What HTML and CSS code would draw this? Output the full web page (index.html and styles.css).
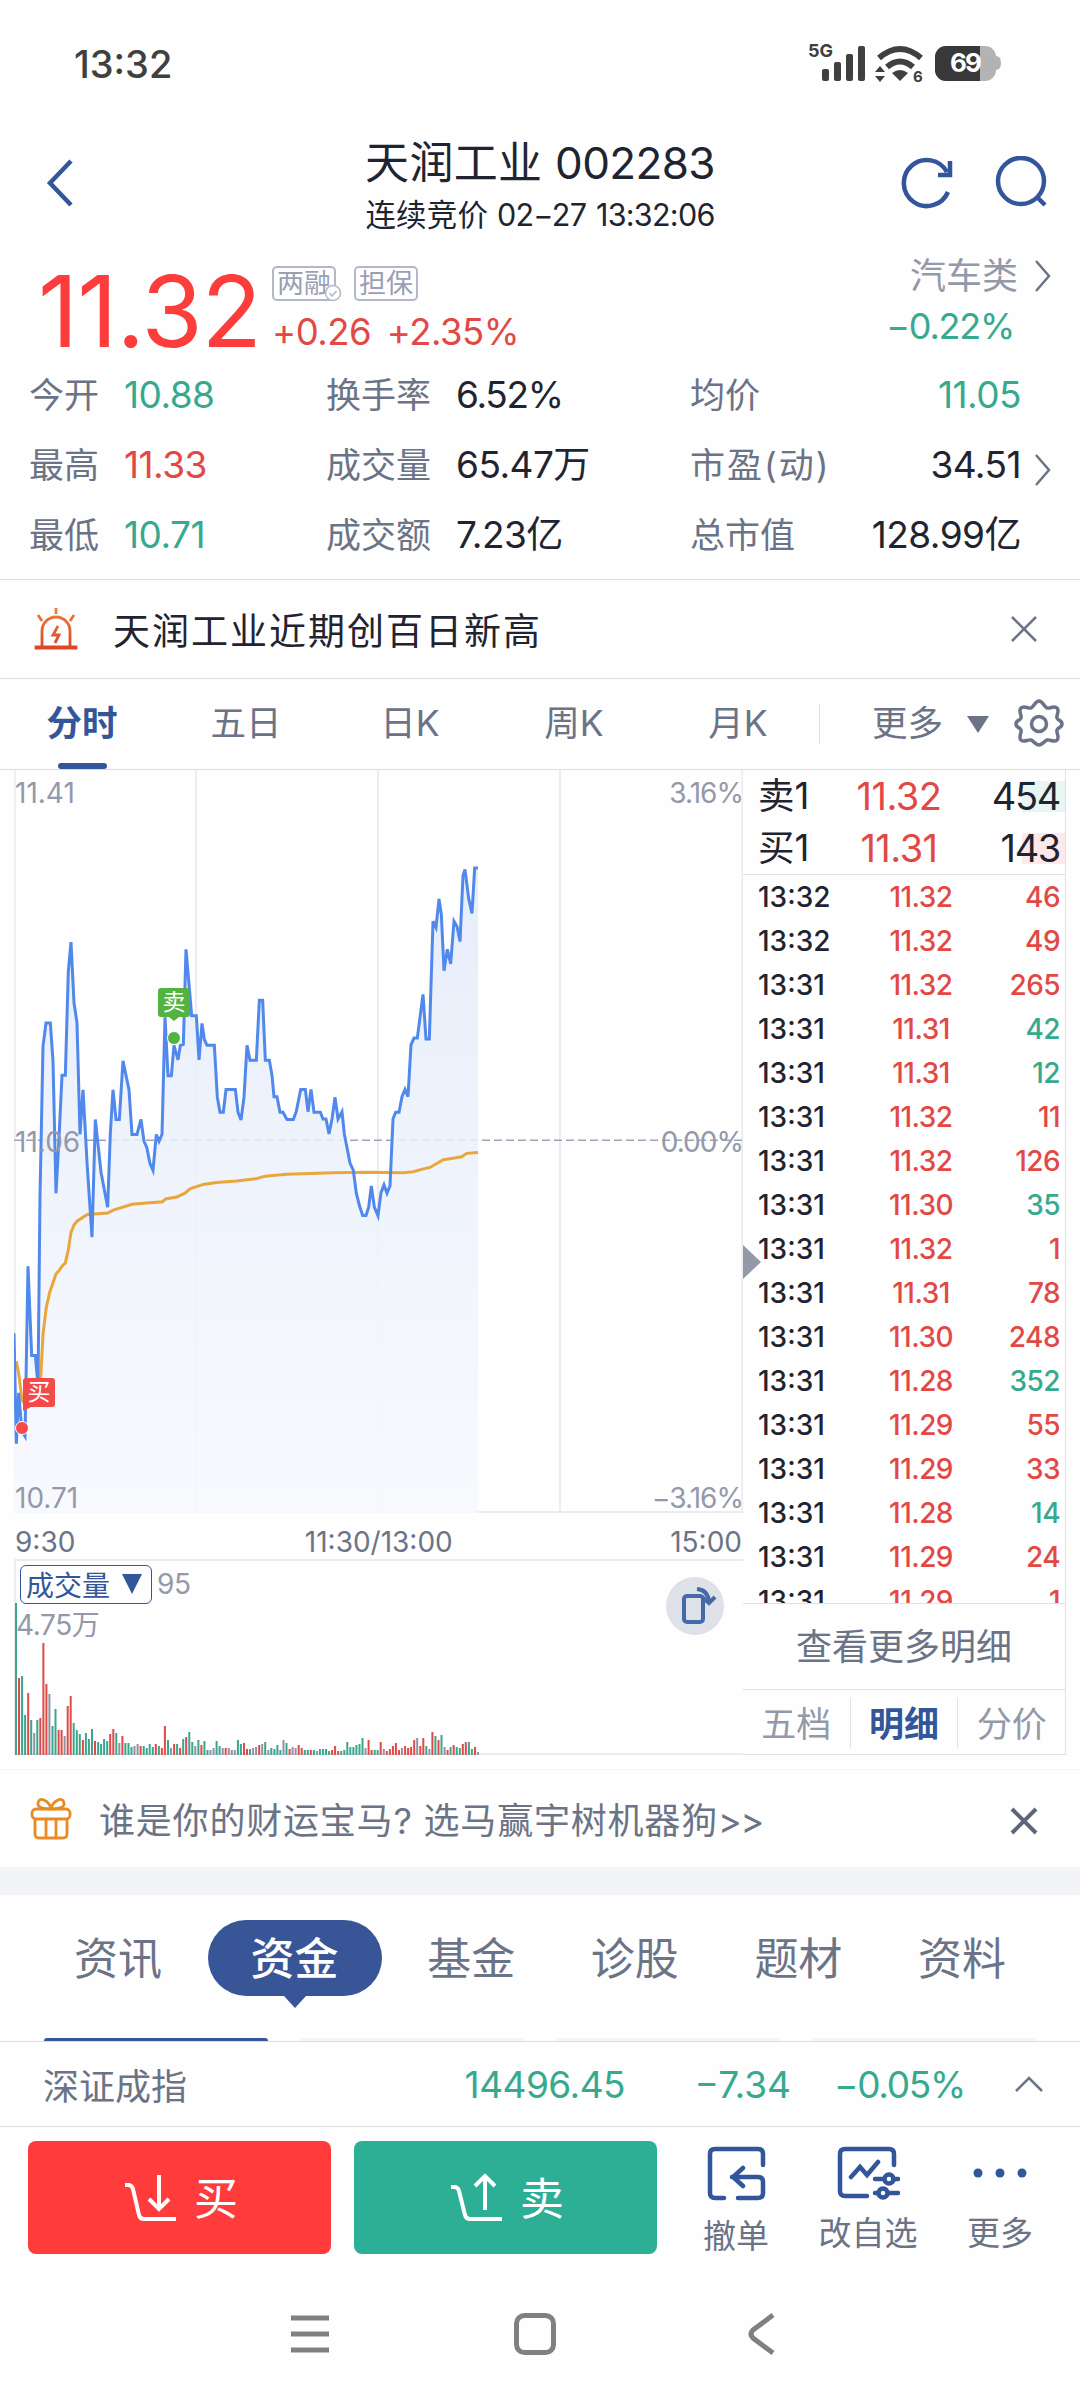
FILE: index.html
```html
<!DOCTYPE html>
<html lang="zh-CN">
  <head>
    <meta charset="UTF-8" />
    <meta name="viewport" content="width=device-width, initial-scale=1.0" />
    <title>天润工业 002283</title>
    <link rel="stylesheet" href="styles.css">
  </head>
  <body>
    <div class="status-bar">
      <span class="clock">13:32</span>
      <svg class="status-icons" width="200" height="44" viewBox="0 0 200 44">
        <g fill="#404040">
          <text x="0" y="16" class="net">5G</text>
          <rect x="14" y="28" width="7" height="12" rx="2" />
          <rect x="26" y="21" width="7" height="19" rx="2" />
          <rect x="38" y="13" width="7" height="27" rx="2" />
          <rect x="50" y="5" width="7" height="35" rx="2" />
          <path d="M92 40l-8-8q8-6 16 0z" />
          <path d="M72 25l5 6h-10zM72 41l5-6h-10z" />
          <text x="105" y="41" class="wifi-gen">6</text>
        </g>
        <path d="M71 17q21-18 42 0" fill="none" stroke="#404040" stroke-width="6" />
        <path d="M79 26q13-11 26 0" fill="none" stroke="#404040" stroke-width="6" />
        <rect x="127" y="5" width="61" height="35" rx="11" fill="#b3b3b3" />
        <path d="M188 15q5 0 5 7t-5 7z" fill="#b3b3b3" />
        <path d="M138 5h34v35h-34a11 11 0 0 1-11-11v-13a11 11 0 0 1 11-11z" fill="#383838" />
        <text x="142" y="31" class="battery">69</text>
      </svg>
    </div>

    <header class="header">
      <svg class="back" width="28" height="50" viewBox="0 0 28 50"><path d="M25 3L4 25l21 22" /></svg>
      <div class="title">
        <h1>天润工业 <span class="n">002283</span></h1>
        <p>连续竞价 <span class="n">02−27 13:32:06</span></p>
      </div>
      <div class="header-icons">
        <svg width="54" height="54" viewBox="0 0 54 54"><path d="M48 36a23 23 0 1 1-1-20M50 5v14h-12" /></svg>
        <svg width="54" height="54" viewBox="0 0 54 54"><circle cx="26" cy="25" r="23" /><path d="M41 40l9 9" /></svg>
      </div>
    </header>

    <section class="quote">
      <div class="quote-top">
        <div class="price">11.32</div>
        <div class="change">
          <div class="tags">
            <span class="tag">两融<svg class="check" width="18" height="18" viewBox="0 0 18 18"><circle cx="9" cy="9" r="7.5" /><path d="M5.500 9l2.500 3 4.500-5" /></svg></span>
            <span class="tag">担保</span>
          </div>
          <p class="red">+0.26 +2.35%</p>
        </div>
        <div class="sector">
          <p>汽车类 <svg class="chevron" width="16" height="32" viewBox="0 0 16 32"><path d="M1 1l13 15L1 31" /></svg></p>
          <p class="green pct">−0.22%</p>
        </div>
      </div>
      <div class="stats">
        <span>今开</span><b class="green n">10.88</b>
        <span>换手率</span><b class="n pct">6.52%</b>
        <span>均价</span><b class="green n">11.05</b><i></i>
        <span>最高</span><b class="red n">11.33</b>
        <span>成交量</span><b class="n">65.47万</b>
        <span class="wide">市盈(动)</span><b class="n">34.51</b>
        <i><svg class="chevron" width="16" height="32" viewBox="0 0 16 32"><path d="M1 1l13 15L1 31" /></svg></i>
        <span>最低</span><b class="green n">10.71</b>
        <span>成交额</span><b class="n">7.23亿</b>
        <span>总市值</span><b class="n">128.99亿</b><i></i>
      </div>
    </section>

    <section class="alert">
      <svg width="44" height="44" viewBox="0 0 44 44">
        <defs>
          <linearGradient id="alarm" x1="0" y1="0" x2="0" y2="1">
            <stop offset="0" stop-color="#e8823a" />
            <stop offset="1" stop-color="#df4526" />
          </linearGradient>
        </defs>
        <path d="M2 41h40v-1H2zM8 40V24a14 14 0 0 1 28 0v16M22 1v6M4 8l4 6M40 8l-4 6M24 19l-5 9h6l-4 8" fill="none" stroke="url(#alarm)" stroke-width="2.800" />
      </svg>
      <p>天润工业近期创百日新高</p>
      <svg class="close" width="26" height="26" viewBox="0 0 26 26"><path d="M1 1l24 24M25 1L1 25" /></svg>
    </section>

    <nav class="periods">
      <a class="active">分时</a>
      <a>五日</a>
      <a>日K</a>
      <a>周K</a>
      <a>月K</a>
      <div class="more">更多 <i></i></div>
      <svg class="gear" width="50" height="50" viewBox="0 0 50 50">
        <path d="M25 2c4 0 5 6 8 7s7-3 10 0-1 7 0 10 5 2 5 6-4 3-5 6 3 7 0 10-7-1-10 0-4 5-8 5-5-4-8-5-7 3-10 0 1-7 0-10-5-2-5-6 4-3 5-6-3-7 0-10 7 1 10 0 4-7 8-7z" />
        <circle cx="25" cy="25" r="7.500" />
      </svg>
    </nav>

    <main class="market">
      <div class="charts">
        <div class="price-chart">
          <svg width="729" height="743" viewBox="42 20 2187 1533" preserveAspectRatio="none">
            <defs>
              <linearGradient id="area" x1="0" y1="0" x2="0" y2="1">
                <stop offset="0" stop-color="#e3ebf9" stop-opacity="0.850" />
                <stop offset="1" stop-color="#f8f9fe" stop-opacity="0.900" />
              </linearGradient>
            </defs>
            <path class="grid" d="M44 20V1553M588 20V1553M1134 20V1553M1680 20V1553M2227 20V1553M42 1551H2229" />
            <path class="mid" d="M42 784H2229" />
            <path id="fill" fill="url(#area)" />
            <polyline id="average" points="49,1240 57,1270 66,1320 75,1330 112,1330 122,1275 129,1185 139,1128 150,1096 168,1060 178,1052 186,1044 196,1037 205,1010 213,974 222,959 231,951 262,937 323,934 340,928 396,916 450,913 487,911 497,905 530,901 555,893 570,884 610,875 650,871 710,868 770,863 795,858 860,854 1000,851 1100,850 1210,851 1240,849 1270,843 1290,840 1330,824 1350,822 1385,818 1400,811 1434,809" />
            <polyline id="price" points="42,1182 49,1410 56,1305 66,1385 75,1395 84,1044 95,1228 106,1228 114,1290 120,900 129,590 138,542 151,542 159,620 168,893 177,780 186,650 196,650 205,435 213,375 222,500 231,542 240,772 249,680 262,840 276,984 286,741 303,850 323,922 331,770 339,680 348,741 358,741 369,620 387,680 396,772 411,772 423,741 432,786 440,798 450,832 459,846 469,772 477,786 486,772 495,530 504,651 514,651 522,588 534,618 541,588 550,586 558,390 568,470 575,527 589,527 597,618 606,543 613,576 621,588 643,588 652,695 660,726 670,726 678,679 706,679 714,726 723,742 732,695 741,588 750,619 769,619 778,495 788,495 796,619 808,619 816,650 822,694 831,694 840,726 849,726 861,741 880,741 889,724 902,679 916,679 924,725 933,679 942,726 961,726 969,740 978,740 987,771 996,740 1005,695 1014,740 1026,725 1033,771 1050,831 1060,846 1069,893 1078,918 1088,939 1098,939 1106,922 1114,878 1123,922 1134,940 1143,892 1152,876 1161,893 1170,878 1179,740 1187,726 1197,726 1206,694 1215,679 1224,694 1233,587 1242,573 1252,573 1269,483 1278,575 1288,575 1299,332 1308,345 1317,286 1324,318 1332,434 1342,390 1352,420 1362,332 1371,343 1380,374 1389,238 1395,225 1406,285 1416,316 1424,222 1434,222" />
          </svg>
          <div class="scale">
            <p><span>11.41</span><span class="pct">3.16%</span></p>
            <p><span>11.06</span><span class="pct">0.00%</span></p>
            <p><span>10.71</span><span class="pct">−3.16%</span></p>
          </div>
          <span class="marker sell">卖</span>
          <span class="dot sell-dot"></span>
          <span class="marker buy">买</span>
          <span class="dot buy-dot"></span>
        </div>
        <div class="times"><span>9:30</span><span class="noon">11:30/13:00</span><span>15:00</span></div>
        <div class="volume">
          <svg id="bars" width="729" height="152" viewBox="0 0 729 152"></svg>
          <div class="volume-head"><span class="select">成交量 <i></i></span><span class="n">95</span></div>
          <p class="n">4.75万</p>
          <div class="rotate">
            <svg width="58" height="58" viewBox="0 0 58 58">
              <rect x="18" y="19" width="19" height="26" rx="3" />
              <path d="M31 12q11 1 12 13M36 20l7 6 6-6" />
            </svg>
          </div>
        </div>
      </div>

      <aside class="book">
        <div class="level ask"><span>卖1</span><b class="n">11.32</b><em class="pct">454</em></div>
        <div class="level bid"><span>买1</span><b class="n">11.31</b><em class="pct">143</em></div>
        <ul class="ticks">
          <li><span>13:32</span><b>11.32</b><em>46</em></li>
          <li><span>13:32</span><b>11.32</b><em>49</em></li>
          <li><span>13:31</span><b>11.32</b><em>265</em></li>
          <li><span>13:31</span><b>11.31</b><em class="green">42</em></li>
          <li><span>13:31</span><b>11.31</b><em class="green">12</em></li>
          <li><span>13:31</span><b>11.32</b><em>11</em></li>
          <li><span>13:31</span><b>11.32</b><em>126</em></li>
          <li><span>13:31</span><b>11.30</b><em class="green">35</em></li>
          <li><span>13:31</span><b>11.32</b><em>1</em></li>
          <li><span>13:31</span><b>11.31</b><em>78</em></li>
          <li><span>13:31</span><b>11.30</b><em>248</em></li>
          <li><span>13:31</span><b>11.28</b><em class="green">352</em></li>
          <li><span>13:31</span><b>11.29</b><em>55</em></li>
          <li><span>13:31</span><b>11.29</b><em>33</em></li>
          <li><span>13:31</span><b>11.28</b><em class="green">14</em></li>
          <li><span>13:31</span><b>11.29</b><em>24</em></li>
          <li><span>13:31</span><b>11.29</b><em>1</em></li>
        </ul>
        <div class="book-more">查看更多明细</div>
        <div class="book-tabs"><a>五档</a><a class="active">明细</a><a>分价</a></div>
        <i class="collapse"></i>
      </aside>
    </main>

    <section class="promo">
      <svg width="42" height="42" viewBox="0 0 42 42">
        <rect x="2" y="11" width="38" height="10" rx="4" />
        <path d="M5 21v15q0 4 4 4h24q4 0 4-4V21M16 21v19M26 21v19M21 11q-14 0-13-6 1-5 6-3 6 3 7 9 1-6 7-9 5-2 6 3 1 6-13 6" />
      </svg>
      <p>谁是你的财运宝马? 选马赢宇树机器狗<span class="pct">&gt;&gt;</span></p>
      <svg class="close" width="28" height="28" viewBox="0 0 28 28"><path d="M2 2l24 24M26 2L2 26" /></svg>
    </section>

    <nav class="info-tabs">
      <a>资讯</a><a class="active">资金</a><a>基金</a><a>诊股</a><a>题材</a><a>资料</a>
    </nav>
    <div class="sub-tabs"><i class="active"></i><i></i><i></i><i></i></div>

    <section class="index-bar">
      <span>深证成指</span>
      <b class="n">14496.45</b>
      <b class="points">−7.34</b>
      <b class="percent pct">−0.05%</b>
      <svg width="30" height="18" viewBox="0 0 30 18"><path d="M2 16L15 3l13 13" /></svg>
    </section>

    <footer class="actions">
      <button class="buy-btn">
        <svg width="56" height="50" viewBox="0 0 56 50"><path d="M2 12h3q4 0 5 4l6 26q1 4 5 4h32M36 2v33M26 26l10 10 10-10" /></svg>买
      </button>
      <button class="sell-btn">
        <svg width="56" height="50" viewBox="0 0 56 50"><path d="M2 14h3q4 0 5 4l6 24q1 4 5 4h32M36 37V3M26 13L36 3l10 10" /></svg>卖
      </button>
      <a class="low">
        <svg width="60" height="56" viewBox="0 0 60 56"><path d="M18 53H9q-5 0-5-5V9q0-5 5-5h43q5 0 5 5v11M32 53h20q5 0 5-5V37q0-5-5-5H26M37 23l-10 9 10 9" /></svg>
        撤单
      </a>
      <a>
        <svg width="64" height="56" viewBox="0 0 64 56"><path d="M31 51H9q-5 0-5-5V9q0-5 5-5h44q5 0 5 5v11M15 32l9-10 7 8 11-13M39 34h8M57 34h5M39 48h3M52 48h10" /><circle cx="53" cy="34" r="4.500" /><circle cx="47" cy="48" r="4.500" /></svg>
        改自选
      </a>
      <a>
        <svg width="60" height="56" viewBox="0 0 60 56"><g class="dots"><circle cx="8" cy="28" r="4.500" /><circle cx="30" cy="28" r="4.500" /><circle cx="52" cy="28" r="4.500" /></g></svg>
        更多
      </a>
    </footer>

    <div class="system-nav">
      <svg width="42" height="42" viewBox="0 0 42 42"><path d="M2 5h38M2 21h38M2 37h38" /></svg>
      <svg width="42" height="42" viewBox="0 0 42 42"><rect x="2.500" y="2.500" width="37" height="37" rx="8" /></svg>
      <svg width="42" height="42" viewBox="0 0 42 42"><path d="M34 2L14 17q-4 4 0 8l20 15" /></svg>
    </div>

    <script src="script.js"></script>
  </body>
</html>
```
FILE: styles.css
```css
* {
  box-sizing: border-box;
}
body {
  font-family: Inter, "Noto Sans CJK SC", sans-serif;
  width: 1080px;
  margin: 0;
  color: #1f2430;
  background-color: #fefefe;
}
h1, p, ul {
  margin: 0;
  padding: 0;
}
b, i, em {
  font-weight: normal;
  font-style: normal;
}
svg {
  display: block;
  flex: none;
}
.n {
  letter-spacing: -0.014em;
}
.pct {
  letter-spacing: -0.035em;
}
.red {
  color: #e24845;
}
.green {
  color: #36a98f;
}

/* status bar */
.status-bar {
  display: flex;
  justify-content: space-between;
  height: 128px;
  padding: 0 72px 0 74px;
}
.clock {
  font-size: 38px;
  font-weight: 500;
  line-height: 128px;
  color: #404040;
}
.status-icons {
  margin-top: 41px;
  overflow: visible;
}
.net {
  font-size: 18px;
  font-weight: 700;
}
.wifi-gen {
  font-size: 15px;
  font-weight: 700;
}
.battery {
  font-size: 26px;
  font-weight: 700;
  letter-spacing: -2px;
  fill: #fff;
}

/* header */
.header {
  display: flex;
  align-items: center;
  height: 110px;
  padding: 0 30px 0 46px;
}
.header svg {
  fill: none;
  stroke: #33569b;
  stroke-width: 4.500;
}
.back {
  margin-right: 106px;
}
.title {
  flex: 1;
  padding-top: 11px;
  text-align: center;
}
.title h1 {
  font-size: 44px;
  font-weight: 400;
  line-height: 51px;
  letter-spacing: 0.300px;
}
.title p {
  font-size: 30.500px;
  line-height: 51px;
  letter-spacing: 0.200px;
}
.title p .n {
  letter-spacing: -0.024em;
  word-spacing: 2px;
}
.header-icons {
  display: flex;
  gap: 41px;
  width: 150px;
}

/* quote */
.quote {
  border-bottom: 1px solid #dcdddf;
  padding-bottom: 9px;
}
.quote-top {
  display: flex;
  height: 122px;
  padding: 0 29px 0 38px;
}
.price {
  width: 234px;
  font-size: 99px;
  line-height: 147px;
  letter-spacing: -0.010em;
  color: #fd3c3c;
}
.change {
  flex: 1;
  padding-top: 28px;
}
.tags {
  display: flex;
  gap: 18px;
}
.tag {
  position: relative;
  height: 35px;
  padding: 0 3px;
  border: 2px solid #b4b7c6;
  border-radius: 5px;
  font-size: 27px;
  line-height: 32px;
  color: #9a9fb2;
}
.check {
  position: absolute;
  right: -8px;
  bottom: -3px;
  fill: #fefefe;
  stroke: #b4b7c6;
  stroke-width: 1.500;
}
.change p {
  margin-top: 11px;
  font-size: 36.500px;
  line-height: 40px;
  letter-spacing: -0.014em;
  word-spacing: 6px;
}
.sector {
  padding-top: 18px;
  font-size: 36px;
  line-height: 40px;
  color: #9499aa;
}
.sector p:first-child {
  display: flex;
  align-items: center;
  justify-content: flex-end;
  gap: 17px;
}
.sector .green {
  margin: 10px 37px 0 0;
  text-align: right;
  color: #36a98f;
}
.chevron {
  fill: none;
  stroke: #6b7386;
  stroke-width: 2.500;
}
.stats {
  display: grid;
  grid-template-columns: 95px 202px 130px 234px 150px 181px 46px;
  padding-left: 29px;
  font-size: 35px;
  line-height: 70px;
}
.stats span {
  color: #6b7386;
}
.stats .wide {
  letter-spacing: 2px;
}
.stats b {
  font-size: 37px;
}
.stats b:nth-child(7n + 6) {
  text-align: right;
}
.stats i {
  padding: 24px 0 0 14px;
}

/* alert */
.alert {
  display: flex;
  align-items: center;
  height: 99px;
  padding: 0 43px 0 34px;
  border-bottom: 1px solid #dcdddf;
}
.alert p {
  flex: 1;
  margin-left: 35px;
  font-size: 37px;
  letter-spacing: 2px;
}
.close {
  fill: none;
  stroke: #6b7386;
  stroke-width: 2.500;
}

/* period tabs */
.periods {
  display: flex;
  align-items: center;
  height: 91px;
  border-bottom: 1px solid #dcdddf;
  font-size: 35.500px;
  color: #6b7386;
}
.periods a {
  position: relative;
  width: 164px;
  line-height: 86px;
  text-align: center;
}
.periods a.active {
  color: #33569b;
  font-weight: 700;
}
.periods a.active::after {
  content: "";
  position: absolute;
  left: 58px;
  bottom: -2px;
  width: 49px;
  height: 6px;
  border-radius: 3px;
  background-color: #33569b;
}
.more {
  display: flex;
  align-items: center;
  gap: 24px;
  margin-right: 25px;
  margin-left: -1px;
  padding-left: 52px;
  border-left: 1px solid #dcdddf;
  line-height: 40px;
}
.more i {
  border: 11px solid transparent;
  border-top: 17px solid #6b7386;
  border-bottom: none;
}
.gear {
  fill: none;
  stroke: #6b7386;
  stroke-width: 3.500;
}

/* charts */
.market {
  display: flex;
  padding: 0 14px;
}
.charts {
  width: 729px;
}
.price-chart {
  position: relative;
  height: 743px;
}
.price-chart path,
.price-chart polyline {
  vector-effect: non-scaling-stroke;
}
.grid {
  fill: none;
  stroke: #ececee;
  stroke-width: 2;
}
.mid {
  stroke: #9aa3b3;
  stroke-width: 1.500;
  stroke-dasharray: 8 4;
}
#average {
  fill: none;
  stroke: #e9a63c;
  stroke-width: 3;
}
#price {
  fill: none;
  stroke: #5088ec;
  stroke-width: 3;
}
.scale {
  position: absolute;
  inset: 0;
  display: flex;
  flex-direction: column;
  justify-content: space-between;
  padding: 8px 0 0 1px;
  font-size: 28px;
  line-height: 30px;
  color: #9499aa;
}
/* sits just under the dashed line */
.scale p:nth-child(2) {
  margin-bottom: 7px;
}
.scale p,
.times {
  display: flex;
  justify-content: space-between;
}
.marker {
  position: absolute;
  width: 32px;
  height: 29px;
  border-radius: 3px;
  font-size: 23px;
  line-height: 29px;
  text-align: center;
  color: #fff;
}
.marker::after {
  content: "";
  position: absolute;
}
.sell {
  left: 144px;
  top: 218px;
  background-color: #52b341;
}
.sell::after {
  left: 11px;
  top: 29px;
  border: 5px solid transparent;
  border-top: 4px solid #52b341;
  border-bottom: none;
}
.buy {
  left: 9px;
  top: 608px;
  background-color: #f54a4a;
}
.buy::after {
  left: 0;
  top: 27px;
  border-right: 12px solid transparent;
  border-top: 6px solid #f54a4a;
}
.dot {
  position: absolute;
  width: 14px;
  height: 14px;
  border: 1px solid #fff;
  border-radius: 50%;
}
.sell-dot {
  left: 153px;
  top: 261px;
  background-color: #52b341;
}
.buy-dot {
  left: 1px;
  top: 651px;
  background-color: #f54a4a;
}
.times {
  height: 46px;
  padding: 0 1px;
  font-size: 28px;
  line-height: 59px;
  color: #6b7386;
}
.noon {
  margin-left: 12px;
}
.volume {
  position: relative;
  height: 196px;
  border: 2px solid #ececee;
  border-right: none;
}
#bars {
  position: absolute;
  left: -1px;
  bottom: -2px;
}
.volume-head {
  display: flex;
  align-items: center;
  gap: 5px;
  height: 46px;
  padding-left: 4px;
  font-size: 28px;
  color: #9499aa;
}
.select {
  display: flex;
  align-items: center;
  gap: 12px;
  position: relative;
  width: 132px;
  height: 39px;
  padding-left: 5px;
  border: 1.500px solid #33569b;
  border-radius: 6px;
  background-color: #fefefe;
  color: #33569b;
}
.select i {
  border: 10px solid transparent;
  border-top: 20px solid #33569b;
  border-bottom: none;
}
.volume p {
  font-size: 28px;
  line-height: 37px;
  color: #9499aa;
}
.rotate {
  position: absolute;
  right: 19px;
  top: 16px;
  border-radius: 50%;
  background-color: #dfe1e8;
}
.rotate svg {
  fill: none;
  stroke: #466aa9;
  stroke-width: 4;
}

/* order book */
.book {
  position: relative;
  width: 323px;
  height: 985px;
  border-right: 1px solid #dfe1e4;
  border-bottom: 1px solid #dfe1e4;
}
.level {
  display: flex;
  height: 52px;
  padding: 0 5px 0 15px;
  font-size: 38px;
  line-height: 53px;
}
.level span {
  width: 83px;
  font-size: 36.500px;
}
.level b {
  width: 116px;
  text-align: center;
  color: #e24845;
}
.level em {
  flex: 1;
  text-align: right;
}
.ask {
  background: linear-gradient(#e8f6f3, #e8f6f3) 100% 50% / 43px 31px no-repeat;
}
.bid {
  background: linear-gradient(#fde9e9, #fde9e9) 100% 50% / 43px 31px no-repeat;
}
.ticks {
  height: 729px;
  overflow: hidden;
  border-top: 1px solid #dfe1e4;
  list-style: none;
  font-size: 28px;
}
.ticks li {
  display: flex;
  height: 44px;
  padding: 0 5px 0 15px;
  line-height: 44px;
}
.ticks span {
  width: 123px;
  font-weight: 500;
}
.ticks b {
  width: 80px;
  font-weight: 500;
  text-align: center;
  letter-spacing: -0.020em;
  color: #e24845;
}
.ticks em {
  flex: 1;
  font-weight: 500;
  text-align: right;
  letter-spacing: -0.020em;
}
.ticks em:not(.green) {
  color: #e24845;
}
.book-more {
  height: 86px;
  border-top: 1px solid #dfe1e4;
  font-size: 36px;
  line-height: 86px;
  text-align: center;
  color: #6b7386;
}
.book-tabs {
  display: flex;
  padding-top: 8px;
  border-top: 1px solid #dfe1e4;
}
.book-tabs a {
  flex: 1;
  height: 50px;
  font-size: 35px;
  line-height: 52px;
  text-align: center;
  color: #9499aa;
}
.book-tabs a + a {
  border-left: 1px solid #dfe1e4;
}
.book-tabs .active {
  font-weight: 700;
  color: #33569b;
}
.collapse {
  position: absolute;
  left: 0;
  top: 475px;
  border: 17px solid transparent;
  border-left: 18px solid #9499aa;
  border-right: none;
}

/* promo */
.promo {
  display: flex;
  align-items: center;
  height: 98px;
  margin-top: 14px;
  padding: 0 42px 0 30px;
  border-top: 1px solid #f3f4f5;
}
.promo svg {
  fill: none;
  stroke: #ea8a24;
  stroke-width: 2.800;
}
.promo .close {
  margin-top: 4px;
  stroke: #5d6579;
  stroke-width: 4;
}
.promo p {
  flex: 1;
  margin: -2px 0 0 27px;
  font-size: 36px;
  letter-spacing: 0.800px;
  color: #6b7386;
}

/* info tabs */
.info-tabs {
  display: flex;
  justify-content: space-between;
  height: 171px;
  padding: 25px 74px 0;
  border-top: 28px solid #f3f4f7;
  font-size: 44px;
  line-height: 79px;
  color: #6b7386;
}
.info-tabs .active {
  position: relative;
  width: 174px;
  height: 76px;
  margin: 0 -30px;
  border-radius: 38px;
  background-color: #385597;
  font-weight: 500;
  text-align: center;
  color: #fff;
}
.info-tabs .active::after {
  content: "";
  position: absolute;
  left: 76px;
  top: 76px;
  border: 11px solid transparent;
  border-top: 12px solid #385597;
  border-bottom: none;
}
.sub-tabs {
  display: flex;
  gap: 32px;
  padding: 0 44px;
}
.sub-tabs i {
  flex: 1;
  height: 3px;
  border-radius: 3px 3px 0 0;
  background-color: #f4f5f9;
}
.sub-tabs .active {
  background-color: #385597;
}

/* index */
.index-bar {
  display: flex;
  align-items: center;
  height: 86px;
  padding: 0 36px 0 43px;
  border: solid #dcdddf;
  border-width: 1px 0;
  font-size: 36px;
  color: #6b7386;
}
.index-bar span {
  flex: 1;
}
.index-bar b {
  width: 170px;
  font-size: 37px;
  text-align: right;
  color: #36a98f;
}
.index-bar .points {
  width: 166px;
}
.index-bar .percent {
  width: 174px;
}
.index-bar svg {
  margin-left: 49px;
  fill: none;
  stroke: #6b7386;
  stroke-width: 2.500;
}

/* bottom actions */
.actions {
  display: flex;
  padding: 14px 0 0 28px;
}
.actions button {
  display: flex;
  align-items: center;
  justify-content: center;
  gap: 15px;
  width: 303px;
  height: 113px;
  margin-right: 23px;
  padding: 0 4px 3px 6px;
  border: none;
  border-radius: 8px;
  font: 44px Inter, "Noto Sans CJK SC", sans-serif;
  color: #fff;
}
.actions button svg {
  margin-top: 3px;
  fill: none;
  stroke: #fff;
  stroke-width: 4;
}
.buy-btn {
  background-color: #ff3b3b;
}
.sell-btn {
  background-color: #2caf95;
}
.actions a {
  display: flex;
  flex-direction: column;
  align-items: center;
  width: 132px;
  padding-top: 4px;
  font-size: 33px;
  line-height: 64px;
  color: #6b7386;
}
.actions a svg {
  fill: none;
  stroke: #33569b;
  stroke-width: 4.500;
  stroke-linecap: round;
}
.actions .low {
  margin-left: -10px;
  line-height: 71px;
}
.actions .dots {
  fill: #33569b;
  stroke: none;
}

/* system nav */
.system-nav {
  display: flex;
  gap: 183px;
  padding: 41px 0 0 289px;
}
.system-nav svg {
  fill: none;
  stroke: #808080;
  stroke-width: 5;
}
```
FILE: script.js
```js
// close the price line down to the bottom of the plot
const line = document.getElementById('price').getAttribute('points');
document.getElementById('fill').setAttribute('d', 'M42,1553 L' + line + ' L1434,1553 Z');

// volume per minute: height + direction (r = up, g = down, n = flat)
const volumes = ('152g 77r 79g 40g 62r 35g 22n 35g 37r 112r 71r 61n 29g 46g 25r 25r 19n 49r 59r 32g 25g 21g 15r 22g 16g 26g ' +
  '14r 13g 11g 16g 14g 21r 26r 22g 12n 19r 12g 12g 8g 9n 11n 9r 9g 7g 11g 8g 11r 9g 7r 29r 15g 7n 11r 11g 7r 16g 18r 23g ' +
  '13g 9n 15g 10r 14g 5g 5n 7n 14g 9g 7n 7r 7n 5n 5n 15g 11g 12r 6r 6g 7n 8n 10r 11n 13g 5n 7g 6g 10g 5g 15n 12g 6r 8n 7n ' +
  '10r 7r 5g 5g 5r 5g 4n 6g 6g 6g 4g 5r 9r 4r 4g 5g 13g 8g 8g 10g 11g 17g 7n 15r 5r 5g 5g 13r 6n 4r 6r 9r 12r 5r 7n 9r 7r ' +
  '8r 15r 17n 9r 17r 9g 6n 23r 19g 15r 20g 8n 5r 8g 10r 8g 7g 11r 13r 13g 6g 8r 3n').split(' ');
const colors = { r: '#de4a48', g: '#3da58d', n: '#8f93a6' };
const step = 462 / (volumes.length - 1);

document.getElementById('bars').innerHTML = volumes.map((v, i) => {
  const h = parseInt(v);
  return `<rect x="${(i * step).toFixed(1)}" y="${152 - h}" width="2" height="${h}" fill="${colors[v.slice(-1)]}" />`;
}).join('');
```
